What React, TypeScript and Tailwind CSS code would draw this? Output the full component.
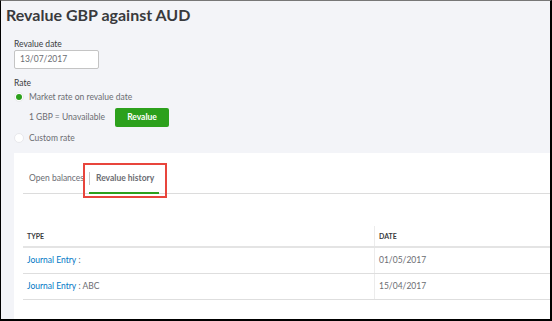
import React from 'react'

const rows = [
  { type: 'Journal Entry', extra: '', date: '01/05/2017' },
  { type: 'Journal Entry', extra: 'ABC', date: '15/04/2017' },
]

export default function App() {
  return (
    <div
      className="w-[552px] h-[321px] overflow-hidden bg-[#f3f4f8] border-t border-t-[#777] border-l border-l-black border-r-2 border-r-black border-b-2 border-b-black flex flex-col text-[#393a3d]"
      style={{ fontFamily: 'Lato, "Open Sans", sans-serif' }}
    >
      {/* Header */}
      <h1 className="pl-[5px] pt-[3px] text-[16px] font-bold leading-[22px] text-[#393a3d]">
        Revalue GBP against AUD
      </h1>

      {/* Form */}
      <div className="pl-[13px] pt-[12px] flex flex-col text-[8.5px]">
        <label className="leading-[12px] text-[#393a3d]">Revalue date</label>
        <div className="w-[85px] h-[19px] bg-white border border-[#c4c4c4] rounded-[2px] flex items-center pl-[5px] text-[#6b6c72]">
          13/07/2017
        </div>

        <div className="mt-[8px] leading-[12px]">Rate</div>

        <div className="mt-[1px] flex items-center gap-[5px] h-[14px]">
          <span className="w-[10px] h-[10px] rounded-full bg-white border border-[#e8e8ec] flex items-center justify-center">
            <span className="w-[6px] h-[6px] rounded-full bg-[#2ca01c]" />
          </span>
          <span className="text-[#6b6c72]">Market rate on revalue date</span>
        </div>

        <div className="mt-[4px] pl-[15px] flex items-center gap-[10px] h-[19px]">
          <span className="text-[#6b6c72]">1 GBP = Unavailable</span>
          <button className="w-[54px] h-[19px] bg-[#2ca01c] rounded-[2px] text-white font-bold">
            Revalue
          </button>
        </div>

        <div className="mt-[4px] flex items-center gap-[5px] h-[14px]">
          <span className="w-[10px] h-[10px] rounded-full bg-white border border-[#e8e8ec]" />
          <span className="text-[#6b6c72]">Custom rate</span>
        </div>
      </div>

      {/* White panel */}
      <div className="mt-[8px] ml-[13px] flex-1 bg-white pl-[9px] pt-[10px] text-[8.5px]">
        {/* Tabs */}
        <div className="flex items-end border-b border-[#dcdcdc] h-[31px]">
          <div className="pl-[6px] pr-[5px] h-full flex items-center text-[#6b6c72]">
            Open balances
          </div>
          <div className="relative h-full flex items-center">
            <span className="w-px h-[13px] bg-[#c8c8c8]" />
            <div className="relative h-full flex items-center pl-[6px] pr-[5px] font-bold text-[#6b6c72]">
              Revalue history
              <span className="absolute left-[-1px] right-[0px] bottom-[-1px] h-[2px] bg-[#2ca01c]" />
            </div>
            <span className="absolute left-[-6px] right-[-8px] top-0 bottom-[-5px] border-2 border-[#e8453c]" />
          </div>
        </div>

        {/* Table */}
        <div className="mt-[32px]">
          <div className="flex h-[22px] border-b-2 border-[#e4e4e4] text-[7px] font-bold text-[#393a3d]">
            <div className="w-[351px] pl-[4px] flex items-center">TYPE</div>
            <div className="flex-1 border-l border-[#ececec] pl-[4px] flex items-center">DATE</div>
          </div>
          {rows.map((r, i) => (
            <div key={i} className="flex h-[26px] border-b border-[#dedede]">
              <div className="w-[351px] pl-[4px] flex items-center">
                <span className="text-[#0077c5]">{r.type}</span>
                <span className="text-[#6b6c72]">&nbsp;:{r.extra ? ' ' + r.extra : ''}</span>
              </div>
              <div className="flex-1 border-l border-[#ececec] pl-[4px] flex items-center text-[#6b6c72]">
                {r.date}
              </div>
            </div>
          ))}
        </div>
      </div>
    </div>
  )
}
